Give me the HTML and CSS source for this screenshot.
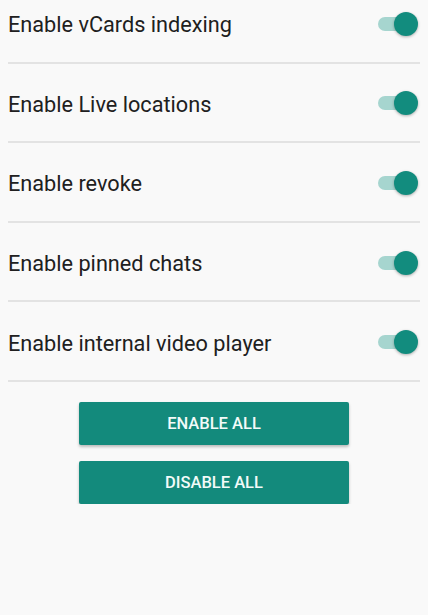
FILE: index.html
```html
<!DOCTYPE html>
<html>
<head>
<meta charset="utf-8">
<link rel="stylesheet" href="styles.css">
</head>
<body>
<div class="list">
  <div class="row"><span class="label">Enable vCards indexing</span><span class="switch"><span class="track"></span><span class="thumb"></span></span></div>
  <div class="row"><span class="label">Enable Live locations</span><span class="switch"><span class="track"></span><span class="thumb"></span></span></div>
  <div class="row"><span class="label">Enable revoke</span><span class="switch"><span class="track"></span><span class="thumb"></span></span></div>
  <div class="row"><span class="label">Enable pinned chats</span><span class="switch"><span class="track"></span><span class="thumb"></span></span></div>
  <div class="row"><span class="label">Enable internal video player</span><span class="switch"><span class="track"></span><span class="thumb"></span></span></div>
</div>
<div class="actions">
  <button class="btn">ENABLE ALL</button>
  <button class="btn">DISABLE ALL</button>
</div>
</body>
</html>
```
FILE: styles.css
```css
html, body {
  margin: 0;
  padding: 0;
  background: #f9f9f9;
  font-family: Roboto, "Noto Sans", sans-serif;
}
.list {
  padding: 0 8px 0 8px;
  margin-top: -16px;
}
.row {
  height: 77.6px;
  border-bottom: 2px solid #e3e3e3;
  display: flex;
  align-items: center;
  justify-content: space-between;
}
.label {
  font-size: 21.7px;
  color: #202020;
  padding-top: 4px;
}
.switch {
  position: relative;
  width: 40px;
  height: 24px;
  margin-right: 2px;
  margin-top: 2px;
}
.track {
  position: absolute;
  left: 0;
  top: 5px;
  width: 36px;
  height: 14px;
  border-radius: 7px;
  background: #a6d5cf;
}
.thumb {
  position: absolute;
  right: 0;
  top: 0;
  width: 24px;
  height: 24px;
  border-radius: 50%;
  background: #128c7e;
  box-shadow: 0 1px 3px rgba(0,0,0,0.3);
}
.actions {
  display: flex;
  flex-direction: column;
  align-items: center;
  gap: 16px;
  padding-top: 20px;
}
.btn {
  width: 270px;
  height: 43px;
  border: none;
  border-radius: 2px;
  background: #138a7c;
  color: #f2fbf9;
  font-family: Roboto, "Noto Sans", sans-serif;
  font-weight: 500;
  font-size: 16.5px;
  box-shadow: 0 2px 3px rgba(0,0,0,0.25);
  padding: 0;
}
```
